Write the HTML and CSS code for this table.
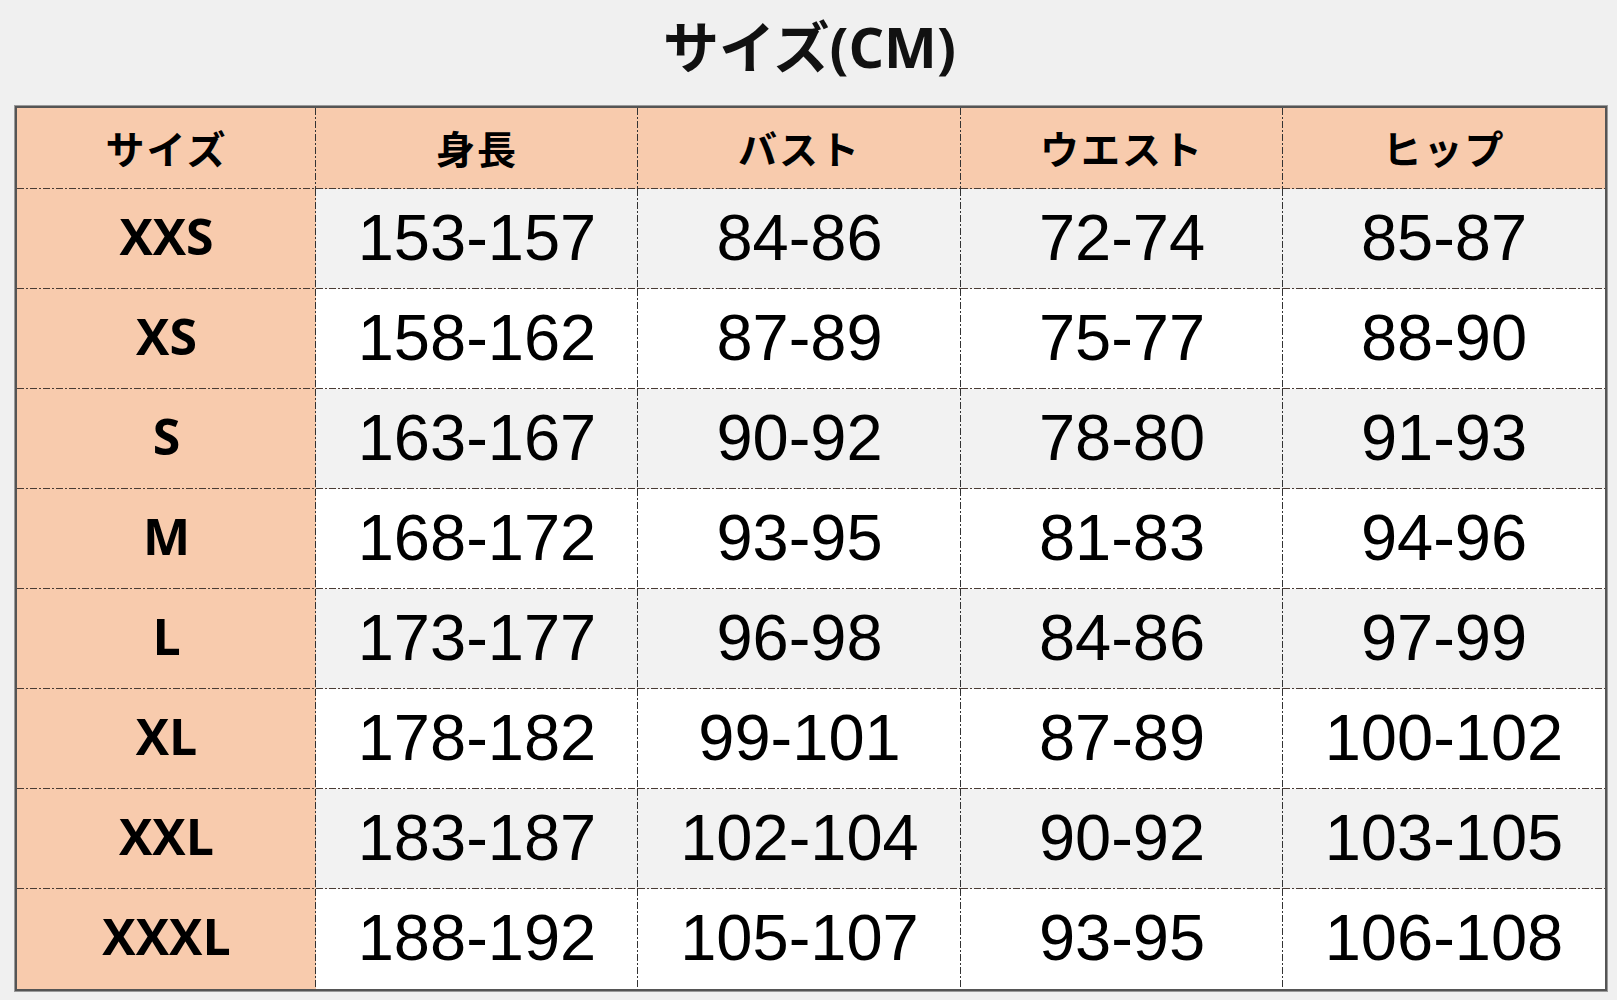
FILE: index.html
```html
<!DOCTYPE html>
<html lang="ja">
<head>
<meta charset="utf-8">
<title>サイズ(CM)</title>
<link rel="stylesheet" href="styles.css">
</head>
<body>
<div class="page">
  <h1 class="title">サイズ(CM)</h1>
  <div class="table">
    <div class="cell head">サイズ</div>
    <div class="cell head">身長</div>
    <div class="cell head">バスト</div>
    <div class="cell head">ウエスト</div>
    <div class="cell head last-col">ヒップ</div>

    <div class="cell key">XXS</div>
    <div class="cell num alt">153-157</div>
    <div class="cell num alt">84-86</div>
    <div class="cell num alt">72-74</div>
    <div class="cell num alt last-col">85-87</div>

    <div class="cell key">XS</div>
    <div class="cell num">158-162</div>
    <div class="cell num">87-89</div>
    <div class="cell num">75-77</div>
    <div class="cell num last-col">88-90</div>

    <div class="cell key">S</div>
    <div class="cell num alt">163-167</div>
    <div class="cell num alt">90-92</div>
    <div class="cell num alt">78-80</div>
    <div class="cell num alt last-col">91-93</div>

    <div class="cell key">M</div>
    <div class="cell num">168-172</div>
    <div class="cell num">93-95</div>
    <div class="cell num">81-83</div>
    <div class="cell num last-col">94-96</div>

    <div class="cell key">L</div>
    <div class="cell num alt">173-177</div>
    <div class="cell num alt">96-98</div>
    <div class="cell num alt">84-86</div>
    <div class="cell num alt last-col">97-99</div>

    <div class="cell key">XL</div>
    <div class="cell num">178-182</div>
    <div class="cell num">99-101</div>
    <div class="cell num">87-89</div>
    <div class="cell num last-col">100-102</div>

    <div class="cell key">XXL</div>
    <div class="cell num alt">183-187</div>
    <div class="cell num alt">102-104</div>
    <div class="cell num alt">90-92</div>
    <div class="cell num alt last-col">103-105</div>

    <div class="cell key last-row">XXXL</div>
    <div class="cell num last-row">188-192</div>
    <div class="cell num last-row">105-107</div>
    <div class="cell num last-row">93-95</div>
    <div class="cell num last-row last-col">106-108</div>
  </div>
</div>
</body>
</html>
```

FILE: styles.css
```css
html, body {
  margin: 0;
  padding: 0;
  background: #f0f0f0;
}

.page {
  width: 1617px;
  height: 1000px;
  display: flex;
  flex-direction: column;
  box-sizing: border-box;
  padding: 0 12px 0 14px;
}

.title {
  margin: 0;
  height: 105px;
  display: flex;
  align-items: center;
  justify-content: center;
  padding-left: 0;
  padding-bottom: 18px;
  box-sizing: border-box;
  font-family: "Open Sans", "Noto Sans CJK JP", sans-serif;
  font-weight: 700;
  font-size: 56px;
  color: #111;
}

.table {
  display: grid;
  grid-template-columns: 299px 322px 323px 322px 322px;
  grid-template-rows: 81px repeat(8, 100px);
  border: 1px solid #9a9a9a;
  box-shadow: inset 0 0 0 2px #555;
  padding: 2px;
  background: #fff;
  width: max-content;
}

.cell {
  display: flex;
  align-items: center;
  justify-content: center;
  color: #000;
  background-color: #fff;
  background-image:
    repeating-linear-gradient(to bottom, #333 0 7px, transparent 7px 9px, #333 9px 11px, transparent 11px 13px),
    repeating-linear-gradient(to right, #4a3c34 0 7px, transparent 7px 9px, #4a3c34 9px 11px, transparent 11px 13px);
  background-size: 1px 100%, 100% 1px;
  background-position: right top, left bottom;
  background-repeat: no-repeat;
}

.cell.last-col {
  background-size: 0 0, 100% 1px;
}

.cell.last-row {
  background-size: 1px 100%, 0 0;
}

.cell.last-row.last-col {
  background-image: none;
}

.head {
  background-color: #f8cbad;
  font-family: "Noto Sans CJK JP", sans-serif;
  font-weight: 700;
  font-size: 39px;
  letter-spacing: 2px;
  padding-bottom: 4px;
}

.key {
  background-color: #f8cbad;
  font-family: "Open Sans", "Noto Sans CJK JP", sans-serif;
  font-weight: 700;
  font-size: 50px;
  padding-bottom: 6px;
}

.num {
  font-family: "Liberation Sans", Arial, sans-serif;
  font-size: 65px;
  padding-bottom: 4px;
}

.alt {
  background-color: #f2f2f2;
}
```
